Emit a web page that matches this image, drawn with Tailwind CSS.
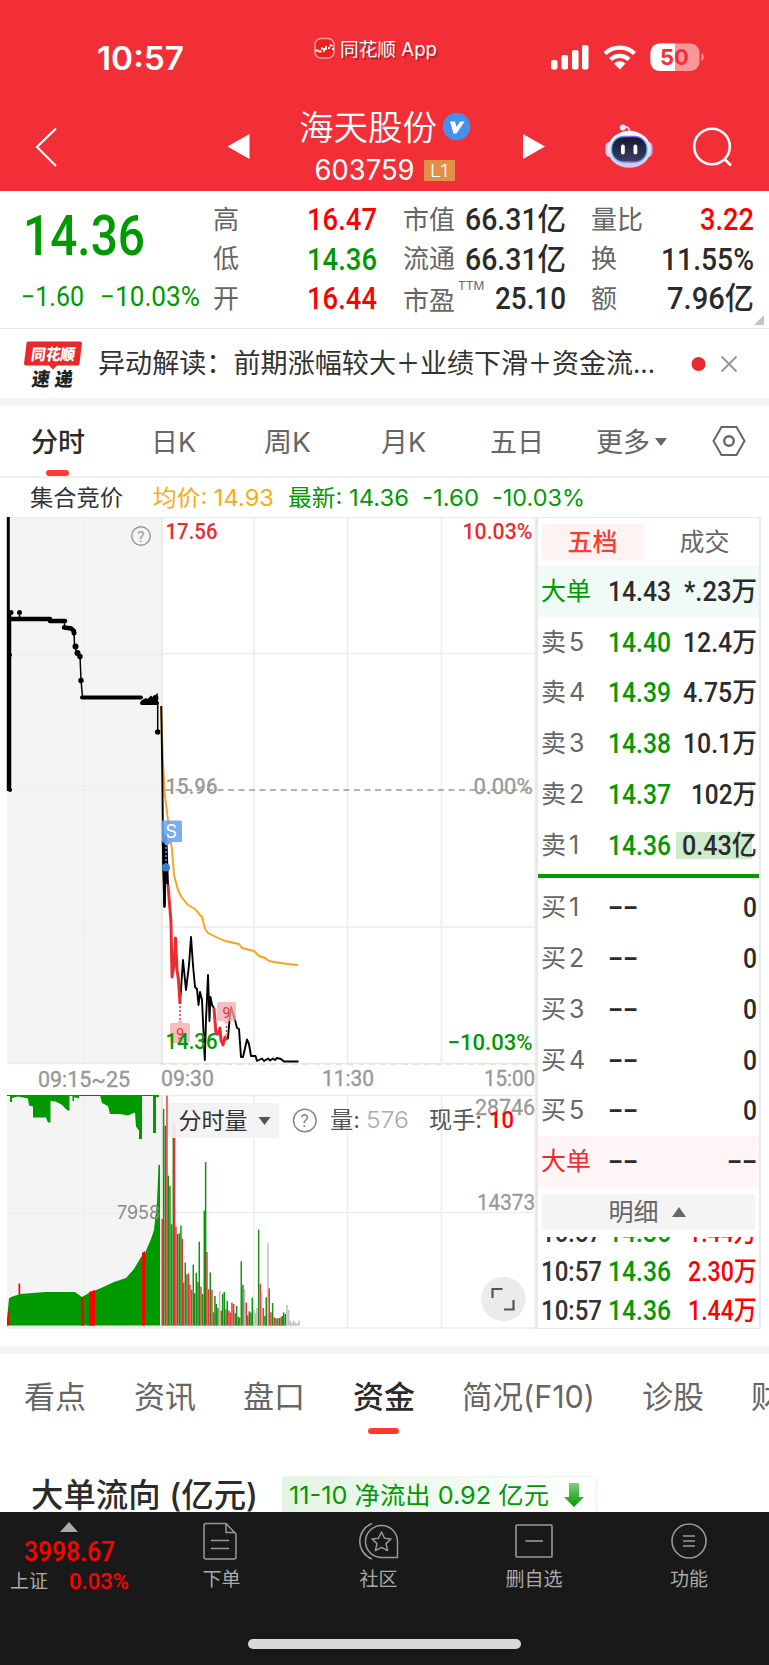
<!DOCTYPE html>
<html lang="zh-CN">
<head>
<meta charset="utf-8">
<title>海天股份 603759</title>
<script src="https://cdn.jsdelivr.net/npm/@tailwindcss/browser@4"></script>
</head>
<body class="bg-white">
<div class="relative flex h-[1665px] w-[769px] flex-col overflow-hidden bg-white font-['Inter','Noto_Sans_CJK_SC',sans-serif] leading-none whitespace-nowrap text-[#333]">

<!-- Header -->
<header class="h-[191px] shrink-0 bg-[#f22f37] text-white">
  <svg class="block" width="769" height="191" viewBox="0 0 769 191" fill="none" font-family="Inter, 'Noto Sans CJK SC', sans-serif">
    <text x="97" y="69.500" font-size="32" font-weight="600" textLength="87" lengthAdjust="spacingAndGlyphs" fill="#fff">10:57</text>
    <rect x="315" y="38.500" width="19" height="19.500" rx="6" fill="#e8201f" stroke="#f9a09f" stroke-width="1.500"/>
    <path d="M315.500 50.500h3M318.500 51.500h3M321.500 49.500l1-2M324 48v4M326 46v4M328 48h2M329.500 45.500h3M332 49h2" stroke="#fff" stroke-width="1.800"/>
    <g font-size="18.500"><text x="341.500" y="57.500" fill="#7d1216" opacity=".55" textLength="97" lengthAdjust="spacingAndGlyphs">同花顺 App</text><text x="340" y="56" fill="#fff" textLength="97" lengthAdjust="spacingAndGlyphs">同花顺 App</text></g>
    <g fill="#fff"><rect x="551" y="60" width="6.500" height="9.500" rx="2"/><rect x="561.500" y="55" width="6.500" height="14.500" rx="2"/><rect x="572" y="50" width="6.500" height="19.500" rx="2"/><rect x="582" y="45" width="6.500" height="24.500" rx="2"/></g>
    <path d="M605 53.500a21.500 21.500 0 0 1 29.500 0M610.500 59.500a13.500 13.500 0 0 1 18.500 0" stroke="#fff" stroke-width="4.300"/>
    <path d="M614 63.500a8.600 8.600 0 0 1 11.500 0L619.800 69.500z" fill="#fff"/>
    <rect x="650.500" y="43.500" width="49" height="27.500" rx="9" fill="#fff" fill-opacity=".5"/>
    <path d="M675 43.500h-15.500a9 9 0 0 0-9 9v9.500a9 9 0 0 0 9 9H675z" fill="#fff"/>
    <path d="M701.500 53v8c3-1.500 3-6.500 0-8z" fill="#fff" fill-opacity=".5"/>
    <text x="660" y="65" font-size="22" font-weight="700" fill="#f22f37" textLength="29" lengthAdjust="spacingAndGlyphs">50</text>
    <path d="M56 128.500 37 147l19 19" stroke="#fff" stroke-width="2.200"/>
    <path d="M227.500 146.500 249.500 134v25zM545 146.500 523 134v25z" fill="#fff"/>
    <text x="299" y="139.500" font-size="34.500" font-weight="350" fill="#fff">海天股份</text>
    <circle cx="456.500" cy="126.500" r="13.700" fill="#4490ee"/>
    <path d="M450 121.500h5l1.500 5.500 3.500-5.500h4.500l-8 12h-3z" fill="#fff"/>
    <text x="314.500" y="179.500" font-size="28" fill="#fff" textLength="100" lengthAdjust="spacingAndGlyphs">603759</text>
    <rect x="424" y="160" width="31" height="21" fill="#e28f48"/>
    <text x="430" y="176.500" font-size="17.500" font-weight="300" fill="#fff" textLength="18" lengthAdjust="spacingAndGlyphs">L1</text>
    <defs>
      <linearGradient id="bot" x1="0" y1="0" x2="0" y2="1"><stop stop-color="#fff"/><stop offset="1" stop-color="#c9c8ee"/></linearGradient>
      <linearGradient id="face" x1="0" y1="0" x2="0" y2="1"><stop stop-color="#14172f"/><stop offset="1" stop-color="#3a4065"/></linearGradient>
      <linearGradient id="rim" x1="0" y1="0" x2="1" y2="0"><stop stop-color="#57c9f5"/><stop offset=".6" stop-color="#8b5cf0"/><stop offset="1" stop-color="#5db6f7"/></linearGradient>
    </defs>
    <path d="M629.500 131c0-3-1.500-4.500-6-4" stroke="#dcdcf4" stroke-width="1.800"/><circle cx="622.800" cy="127.500" r="3" fill="#f2ecfb"/>
    <rect x="605.500" y="142" width="9" height="15" rx="4.500" fill="#d5d2ef"/><rect x="643.500" y="142" width="9" height="15" rx="4.500" fill="#bdbbe4"/>
    <ellipse cx="629.300" cy="149.300" rx="21.500" ry="18.500" fill="url(#bot)"/>
    <rect x="611.500" y="136.500" width="35.500" height="25.500" rx="12" fill="url(#face)" stroke="url(#rim)" stroke-width="1.300"/>
    <rect x="621" y="144.500" width="3.800" height="10" rx="1.900" fill="#fff"/><rect x="633.500" y="144.500" width="3.800" height="10" rx="1.900" fill="#fff"/>
    <circle cx="712" cy="146.500" r="17.800" stroke="#fff" stroke-width="2.600"/><path d="m724 158.500 7 7" stroke="#fff" stroke-width="2.600"/>
  </svg>
</header>

<!-- Quote summary -->
<section class="relative flex h-[138px] shrink-0 border-b border-[#e8e8e8] font-['Roboto','Noto_Sans_CJK_SC',sans-serif]">
  <div class="w-[213px] shrink-0 pt-[15px] text-[#009a00]">
    <div class="flex h-[58px] items-center pl-[23px] text-[55px] font-medium"><span data-w="122">14.36</span></div>
    <div class="mt-[13px] flex h-[38px] items-center pl-[21px] text-[27px]"><span data-w="63">−1.60</span><span class="ml-[16px]" data-w="100">−10.03%</span></div>
  </div>
  <div class="mt-[9px] flex w-[164px] shrink-0 flex-col text-[26px] text-[#666]">
    <div class="flex h-[39.500px] items-center justify-between">高<span class="mt-[-2px] text-[31px] font-medium text-[#f00]" data-w="70">16.47</span></div>
    <div class="flex h-[39.500px] items-center justify-between">低<span class="mt-[-2px] text-[31px] font-medium text-[#009a00]" data-w="70">14.36</span></div>
    <div class="flex h-[39.500px] items-center justify-between">开<span class="mt-[-2px] text-[31px] font-medium text-[#f00]" data-w="70">16.44</span></div>
  </div>
  <div class="mt-[9px] ml-[26px] flex w-[163px] shrink-0 flex-col text-[26px] text-[#666]">
    <div class="flex h-[39.500px] items-center justify-between">市值<span class="mt-[-2px] text-[31px] font-medium text-[#2b2b2b]" data-w="101">66.31亿</span></div>
    <div class="flex h-[39.500px] items-center justify-between">流通<span class="mt-[-2px] text-[31px] font-medium text-[#2b2b2b]" data-w="101">66.31亿</span></div>
    <div class="flex h-[39.500px] items-center justify-between"><span class="flex"><span class="pt-[4px]">市盈</span><span class="mt-[-4px] ml-[3px] font-[Inter] text-[12px]">TTM</span></span><span class="mt-[-2px] text-[31px] font-medium text-[#2b2b2b]" data-w="71">25.10</span></div>
  </div>
  <div class="mt-[9px] ml-[25px] flex w-[163px] shrink-0 flex-col text-[26px] text-[#666]">
    <div class="flex h-[39.500px] items-center justify-between">量比<span class="mt-[-2px] text-[31px] font-medium text-[#f00]" data-w="54">3.22</span></div>
    <div class="flex h-[39.500px] items-center justify-between">换<span class="mt-[-2px] text-[31px] font-medium text-[#2b2b2b]" data-w="93">11.55%</span></div>
    <div class="flex h-[39.500px] items-center justify-between">额<span class="mt-[-2px] text-[31px] font-medium text-[#2b2b2b]" data-w="87">7.96亿</span></div>
  </div>
  <svg class="absolute right-[5px] bottom-[3px]" width="10" height="10"><path d="M10 0v10H0z" fill="#c4c4c4"/></svg>
</section>

<!-- News flash -->
<section class="flex h-[69px] shrink-0 items-center pl-[24px]">
  <svg class="shrink-0" width="60" height="52" viewBox="24 336 60 52" font-family="'Noto Sans CJK SC', sans-serif" font-weight="900">
    <path d="M29 339.500h51a2 2 0 0 1 2 2l-2.500 20a2 2 0 0 1-2 2H57l-4 4-4-4H26a2 2 0 0 1-2-2l2.500-20a2 2 0 0 1 2.500-2z" fill="#e9282d"/>
    <text transform="translate(30.500 358) skewX(-8)" font-size="15.500" fill="#fff" textLength="44" lengthAdjust="spacingAndGlyphs">同花顺</text>
    <text transform="translate(31 384) skewX(-8)" font-size="19" fill="#222"><tspan x="0" textLength="18" lengthAdjust="spacingAndGlyphs">速</tspan><tspan x="23" textLength="18" lengthAdjust="spacingAndGlyphs">递</tspan></text>
  </svg>
  <div class="ml-[14px] flex w-[593px] shrink-0 items-center text-[27px]"><span data-w="298">异动解读：前期涨幅较大</span><span data-w="24">＋</span><span data-w="108">业绩下滑</span><span data-w="24">＋</span><span data-w="81">资金流</span><span data-w="22">...</span></div>
  <svg class="shrink-0" width="50" height="20" viewBox="691 0 50 20"><circle cx="698.500" cy="10" r="7" fill="#e9292e"/><path d="m721.500 2.500 15 15m0-15-15 15" stroke="#999" stroke-width="2"/></svg>
</section>
<div class="h-[8px] shrink-0 bg-[#f4f4f4]"></div>

<!-- Period tabs -->
<nav class="relative flex h-[72px] shrink-0 items-center border-b-2 border-[#efefef] pt-[2px] text-[27px] text-[#666]">
  <span class="ml-[31px] w-[120px] shrink-0 font-medium text-[#2b2b2b]">分时</span>
  <span class="w-[113px] shrink-0"><span data-w="45">日K</span></span>
  <span class="w-[117px] shrink-0"><span data-w="47">周K</span></span>
  <span class="w-[109px] shrink-0"><span data-w="45">月K</span></span>
  <span class="w-[106px] shrink-0">五日</span>
  <span class="shrink-0">更多</span>
  <svg class="ml-[5px] shrink-0" width="12" height="10"><path d="M0 1h12L6 9z" fill="#666"/></svg>
  <svg class="mt-[-2px] ml-[45px] shrink-0" width="34" height="32" viewBox="0 0 34 32" fill="none" stroke="#666" stroke-width="2"><path d="M9.500 2h15l8 14-8 14h-15L1.500 16z"/><circle cx="17" cy="16" r="4.800" stroke-width="2.400"/></svg>
  <i class="absolute bottom-0 left-[46px] h-[6px] w-[23px] rounded-full bg-[#ff3a30]"></i>
</nav>
<div class="flex h-[39px] shrink-0 items-center pt-[2px] text-[22.500px]">
  <span class="ml-[30px] w-[123px] shrink-0"><span data-w="93">集合竞价</span></span>
  <span class="w-[135px] shrink-0 text-[#ffa90d]"><span data-w="121">均价: 14.93</span></span>
  <span class="w-[134px] shrink-0 text-[#009a00]"><span data-w="121">最新: 14.36</span></span>
  <span class="w-[70px] shrink-0 text-[#009a00]"><span data-w="57">-1.60</span></span>
  <span class="text-[#009a00]"><span data-w="93">-10.03%</span></span>
</div>

<!-- Chart and order book -->
<section class="flex h-[812px] shrink-0">
  <svg class="block shrink-0" width="536" height="812" viewBox="0 517 536 812" fill="none" font-family="Roboto, 'Noto Sans CJK SC', sans-serif">
    <rect x="7" y="517" width="154.500" height="546" fill="#f4f4f4"/><rect x="7" y="1095" width="154.500" height="234" fill="#f4f4f4"/>
    <g stroke="#ececec" stroke-width="1.500">
      <path d="M7 517.500H537M162 653.500H537M162 927H537M7 1063.500H537M7 1095.500H537M162 1212.500H537M7 1328H537M254 517v547M347.500 517v547M441.500 517v547M254 1095v233M347.500 1095v233M441.500 1095v233M535.300 517v812"/>
      <path d="M162 517v547M162 1095v233" stroke="#e4e4e4"/>
      <path d="M84.500 517v547M84.500 1095v233M7 654.500H162M7 928H162M7 1213H162M7 790H162" stroke-dasharray="2 2" stroke="#eaeaea"/>
    </g>
    <path d="M165 790H533" stroke="#999" stroke-width="1.300" stroke-dasharray="6 4.500"/>
    <path d="M160 1064H537" stroke="#f0dcc4" stroke-width="1.500" stroke-dasharray="6 5"/>
    <circle cx="141" cy="536" r="9.300" stroke="#999" stroke-width="1.400"/><text x="137.200" y="541.500" font-size="15" fill="#999">?</text>
    <g stroke="#000">
      <path d="M8.300 517V791" stroke-width="3"/><path d="M9.500 611V791" stroke-width="3.500"/>
      <path d="M10 619H50M50 621H65M64 627.500L71 628.500L74 631" stroke-width="4.500" stroke-linecap="round"/>
      <path d="M64.500 621v6M74 630L74.500 646L77 653L80 656L81 680L82.500 697M157.700 703V732M19.500 612V619" stroke-width="1.500"/>
      <path d="M82 697.500H141M142 703H157" stroke-width="4" stroke-linecap="round"/><path d="m142 702 4-2 2 1 3-3 2 2 3-3v6" stroke-width="3.500"/>
    </g>
    <g fill="#000"><circle cx="11" cy="612.500" r="2.500"/><circle cx="19.500" cy="612.500" r="2.500"/><circle cx="10" cy="655" r="2"/><circle cx="10" cy="790" r="2"/><circle cx="74" cy="633" r="2.500"/><circle cx="75.500" cy="646.500" r="3"/><circle cx="77.500" cy="653" r="3"/><circle cx="80" cy="656.500" r="2.700"/><circle cx="81" cy="680.500" r="2.700"/><circle cx="155.500" cy="698" r="3"/><circle cx="157.700" cy="732" r="2.700"/></g>
    <g font-size="22">
      <text x="165.500" y="539" font-weight="500" fill="#ee2a2e" textLength="52" lengthAdjust="spacingAndGlyphs">17.56</text>
      <text x="462.500" y="539" font-weight="500" fill="#ee2a2e" textLength="70" lengthAdjust="spacingAndGlyphs">10.03%</text>
      <text x="165.500" y="794" font-weight="500" fill="#999" textLength="52" lengthAdjust="spacingAndGlyphs">15.96</text>
      <text x="473.500" y="794" fill="#999" stroke="#999" stroke-width=".3" textLength="59" lengthAdjust="spacingAndGlyphs">0.00%</text>
      <text x="447.500" y="1049.500" font-weight="500" fill="#009a00" textLength="85" lengthAdjust="spacingAndGlyphs">−10.03%</text>
    </g>
    <path d="M161 706L163 760L164.500 792L168 820L172 850L174 875L178 890L181.500 897L188 905L195 909L199 914L202 917L205 929L208 933L216 937L225 941L239 944L242 948L254 951L259 956L265 958L269 961L280 963L288 964L298 965" stroke="#ff9f1c" stroke-width="1.900" stroke-linejoin="round"/>
    <g stroke-width="2" stroke-linejoin="round">
      <path d="M161.300 706L162.500 790L163 843L164.500 907L165.500 835L166.500 842L168 885M180 1004L183 960L186 990L189 965L191 937L193 965L195 987L197 989L198.500 1005L200 992L202 1000L204.800 1060L206 1020L208 975L209.500 1021L210.500 997L212 1005L214 1008M226.500 1040L228 1038L229.500 1020L231 1007L235 1020L237 1028L239 1029L241 1057H243L247 1039.500L249 1044L251 1056H255.500L257 1061L262 1058.500L264 1061L268 1058.500L270 1060.500L273 1058.500L275 1060L277 1058L281 1059L284 1061.500H298.500" stroke="#000" stroke-width="1.900"/>
      <path d="M163 840l1.500 66L165.500 836l1.500 48" stroke="#000" stroke-width="2.500"/>
      <path d="M168 885L171 922L172 977L174 965L175.500 938L177 970L178.500 980L180 1004M214 1008L216 1034H218L220 1028L221 1040L223 1045L225 1037L227 1040" stroke="#ea2d31" stroke-width="3"/>
    </g>
    <path d="M180 1006v14M226.500 1026v9" stroke="#ea2d31" stroke-width="1.500" stroke-dasharray="2 2"/>
    <g fill="#f6a7aa" fill-opacity=".75"><path d="M172 1023h5l3-4 3 4h5a2 2 0 0 1 2 2v16a2 2 0 0 1-2 2h-16a2 2 0 0 1-2-2v-16a2 2 0 0 1 2-2z"/><path d="M219 1002h15a2 2 0 0 1 2 2v15a2 2 0 0 1-2 2h-5l-3 4-3-4h-4a2 2 0 0 1-2-2v-15a2 2 0 0 1 2-2z"/></g>
    <g font-size="14" fill="#ea2d31"><text x="176.200" y="1039">9</text><text x="222.500" y="1018">9</text></g>
    <text x="165.500" y="1049" font-size="22" font-weight="500" fill="#009a00" textLength="52" lengthAdjust="spacingAndGlyphs">14.36</text>
    <path d="M166 843v24" stroke="#3d7fd6" stroke-width="2" stroke-dasharray="2 2"/><circle cx="166" cy="867.500" r="4" fill="#3b7dd0"/>
    <rect x="161.500" y="820.500" width="20.500" height="21.500" rx="1.500" fill="#6ba5f2" fill-opacity=".9"/><path d="m163 842h8l-4 4z" fill="#6ba5f2"/>
    <text x="165.500" y="838" font-size="18" font-family="Inter" fill="#fff">S</text>
    <g font-size="22" fill="#999" stroke="#999" stroke-width=".4"><text x="38" y="1087" textLength="92" lengthAdjust="spacingAndGlyphs">09:15~25</text><text x="161" y="1086" textLength="53" lengthAdjust="spacingAndGlyphs">09:30</text><text x="322" y="1086" textLength="52" lengthAdjust="spacingAndGlyphs">11:30</text><text x="484" y="1086" textLength="51" lengthAdjust="spacingAndGlyphs">15:00</text></g>

    <path d="M7 1095.500h152" stroke="#009a00"/><path d="M7 1095.500h3M80 1095.500h20M142 1095.500h9" stroke="#f00"/>
    <path d="M10 1095v7h2v-4l6-1.500 10 2 1 7 4 1v11h13l2 5h2.500v-21.500l5 .5 6 3 6 6h2V1095h3v6h1.500v-4l5 1.500v-3.500H100l2 8 6 3 2 8h10l8 1.500 7-3 1 14 3 4v8.500h3V1095h11v38h3v-36h3v-2z" fill="#009a00"/>
    <path d="M7 1325.500v-6l2-21 2-1.500 9-3 25-2h30l7 5 7-4 12-5 13-6 12-4 8-9 7-12 4-4 6-14 3-9 3-28 1.500-37h1.500v160.500z" fill="#009a00"/>
    <path d="M81 1297h3v28.500h-3zM89 1292l6-2v35.500h-6zM142 1253l3-2v74.500h-3zM18.500 1283.500h1.700v11h-1.700zM7 1320l2-12v17.500H7z" fill="#f00"/>
    <g id="volume"></g>
    <text x="117" y="1219" font-size="19" font-family="Inter" fill="#8b8b8b" textLength="43" lengthAdjust="spacingAndGlyphs">7958</text>
    <g font-size="22" fill="#999" stroke="#999" stroke-width=".3"><text x="475" y="1114.500" textLength="60" lengthAdjust="spacingAndGlyphs">28746</text>
    <text x="477" y="1210" textLength="58" lengthAdjust="spacingAndGlyphs">14373</text></g>
    <rect x="168" y="1103" width="111" height="35" rx="3" fill="#f2f2f2" fill-opacity=".93"/>
    <text x="178.500" y="1129" font-size="23" fill="#333">分时量</text><path d="M258.500 1117h12l-6 8z" fill="#555"/>
    <circle cx="304.800" cy="1120.500" r="11.300" stroke="#888" stroke-width="1.500"/><text x="300.200" y="1127" font-size="18" fill="#888">?</text>
    <g font-size="23" font-family="Inter, 'Noto Sans CJK SC', sans-serif"><text x="330" y="1128" fill="#555" textLength="30" lengthAdjust="spacingAndGlyphs">量:</text><text x="366" y="1128" fill="#aaa" textLength="43" lengthAdjust="spacingAndGlyphs" font-weight="300">576</text><text x="429" y="1128" fill="#555" textLength="53" lengthAdjust="spacingAndGlyphs">现手:</text></g>
    <text x="489" y="1128" font-size="23" font-weight="500" fill="#f00" textLength="25" lengthAdjust="spacingAndGlyphs">10</text>
    <circle cx="503.400" cy="1299" r="22.300" fill="#ebebeb"/><path d="M492.500 1298v-9h10M504 1309.500h9.500V1300" stroke="#555" stroke-width="2.200"/>
  </svg>

  <div class="flex w-[225px] shrink-0 flex-col border-x-2 border-y border-[#e9e9e9] font-['Roboto','Noto_Sans_CJK_SC',sans-serif] text-[25px]">
    <div class="flex h-[48px] shrink-0 items-center pl-[4px]">
      <span class="flex h-[37px] w-[101px] items-center justify-center rounded bg-[#fff2f2] font-medium text-[#ff3a30]">五档</span>
      <span class="flex flex-1 justify-center pl-[7px] text-[#666]">成交</span>
    </div>
    <div id="book" class="flex shrink-0 flex-col"></div>
    <div class="mr-[4px] ml-[4px] mt-[7px] flex h-[36px] shrink-0 items-center justify-center gap-[13px] bg-[#f4f4f4] pr-[3px] text-[#666]">明细<svg width="14" height="11"><path d="M7 0l7 10H0z" fill="#666"/></svg></div>
    <div class="mt-[7px] flex min-h-0 flex-1 flex-col overflow-hidden"><div class="mt-[-24px] flex shrink-0 flex-col" id="ticks"></div></div>
  </div>
</section>

<div class="mt-[17px] h-[8px] shrink-0 bg-[#f4f4f4]"></div>

<!-- Section tabs -->
<nav class="relative flex h-[88px] shrink-0 items-center pb-[3px] text-[31px] text-[#666]">
  <span class="ml-[24px] w-[110px] shrink-0">看点</span><span class="w-[109px] shrink-0">资讯</span><span class="w-[110px] shrink-0">盘口</span>
  <span class="w-[109px] shrink-0 font-medium text-[#2b2b2b]">资金</span><span class="w-[180px] shrink-0"><span data-w="133">简况(F10)</span></span><span class="w-[109px] shrink-0">诊股</span><span class="shrink-0">财务</span>
  <i class="absolute bottom-[8px] left-[368px] h-[6px] w-[31px] rounded-full bg-[#ff3a30]"></i>
</nav>
<div class="flex h-[70px] shrink-0 items-end overflow-hidden pl-[31px]">
  <h2 class="h-[33px] w-[251px] shrink-0 text-[32.500px] font-medium text-[#2b2b2b]"><span data-w="227">大单流向 (亿元)</span></h2>
  <div class="flex h-[36px] w-[315px] shrink-0 items-center gap-[15px] rounded-t border border-b-0 border-[#e9f6e9] bg-linear-to-r from-[#e3f4e4] to-white pl-[6px] text-[24px] text-[#009a00]"><span data-w="260">11-10 净流出 0.92 亿元</span>
    <svg width="20" height="24"><defs><linearGradient id="ar" x1="0" y1="0" x2="0" y2="1"><stop stop-color="#7fd07f"/><stop offset="1" stop-color="#009a00"/></linearGradient></defs><path d="M5 0h10v14h5L10 24 0 14h5z" fill="url(#ar)"/></svg>
  </div>
</div>

<!-- Bottom bar -->
<footer class="relative flex h-[153px] shrink-0 bg-[#191919] text-[19px] text-[#aaa]">
  <div class="flex w-[140px] shrink-0 flex-col pt-[10px] font-['Roboto','Noto_Sans_CJK_SC',sans-serif]">
    <svg class="ml-[60px]" width="18" height="10"><path d="M9 0l9 10H0z" fill="#aaa"/></svg>
    <span class="mt-[5px] ml-[24px] flex h-[28px] items-center text-[27px] font-medium text-[#f00]"><span data-w="91">3998.67</span></span>
    <span class="ml-[10px] flex h-[33px] items-center">上证<span class="ml-[21px] text-[22.500px] font-medium text-[#f00]" data-w="60">0.03%</span></span>
  </div>
  <div class="flex w-[159px] shrink-0 flex-col items-center pt-[10px]">
    <svg width="36" height="38" viewBox="0 0 36 38" fill="none" stroke="#999" stroke-width="1.500"><path d="M3 1.500h21L34 12v23a2 2 0 0 1-2 2H4a2 2 0 0 1-2-2V3z"/><path d="M24 1.500V10.500h9M9 18.500h18M9 26.500h18"/></svg><span class="mt-[10px] pl-[4px]">下单</span>
  </div>
  <div class="flex w-[159px] shrink-0 flex-col items-center pt-[10px]">
    <svg width="40" height="38" viewBox="0 0 40 38" fill="none" stroke="#999" stroke-width="1.500"><path d="M13 1.500A19 19 0 0 0 13 37M38.500 35.500H22a16 16 0 1 1 16.500-16z"/><path d="m22.500 10 3 6.300 6.500.7-5 4.600 1.600 7-6.100-3.200-6.100 3.200 1.600-7-5-4.600 6.500-.7z" stroke-linejoin="round"/></svg><span class="mt-[10px]">社区</span>
  </div>
  <div class="flex w-[152px] shrink-0 flex-col items-center pt-[10px]">
    <svg width="38" height="38" viewBox="0 0 38 38" fill="none" stroke="#999" stroke-width="1.600"><rect x="1" y="3" width="36" height="32" rx="1"/><path d="M10.500 19h17.500"/></svg><span class="mt-[10px]">删自选</span>
  </div>
  <div class="flex w-[158px] shrink-0 flex-col items-center pt-[10px]">
    <svg width="38" height="38" viewBox="0 0 38 38" fill="none" stroke="#999" stroke-width="1.600"><circle cx="19" cy="19" r="17"/><path d="M13 14h12M13 19h12M13 24h12"/></svg><span class="mt-[10px]">功能</span>
  </div>
  <i class="absolute bottom-[16px] left-[248px] h-[10px] w-[273px] rounded-full bg-[#d8d8d8]"></i>
</footer>
</div>

<script>
  // Order book rows: label, price, amount, price colour, amount width, row fill, label style
  const G = 'text-[#009a00]', K = 'text-[#2b2b2b]', R = 'text-[#f00]';
  const rows = [
    ['大单', '14.43', '*.23万', K, 73, 'bg-[#f0faf6]', 'text-[#009a00]'],
    ['卖5', '14.40', '12.4万', G, 74], ['卖4', '14.39', '4.75万', G, 74], ['卖3', '14.38', '10.1万', G, 74],
    ['卖2', '14.37', '102万', G, 66], ['卖1', '14.36', '0.43亿', G, 75],
    null,
    ['买1', '––', '0', K, 14], ['买2', '––', '0', K, 14], ['买3', '––', '0', K, 14], ['买4', '––', '0', K, 14], ['买5', '––', '0', K, 14],
    ['大单', '––', '––', K, 30, 'bg-[#fff5f6]', 'text-[#f0292e]']
  ];
  document.getElementById('book').innerHTML = rows.map(r => {
    if (!r) return '<div class="mt-[3px] mb-[5px] h-[4px] bg-[#009a00]"></div>';
    const [l, p, a, c, w, bg = '', lc = 'text-[#666]'] = r;
    const label = l === '大单' ? l : `${l[0]}<span class="ml-[3px] font-[Inter]">${l[1]}</span>`;
    const fill = l === '卖1' ? '<i class="absolute top-[12px] right-[7px] h-[27px] w-[76px] bg-[#cdebcd]"></i>' : l === '卖2' ? '<i class="absolute top-[12px] right-[7px] h-[27px] w-[2px] bg-[#cdebcd]"></i>' : '';
    return `<div class="relative flex h-[50.750px] items-center pl-[3px] pr-[2px] ${bg}">${fill}<span class="w-[67px] shrink-0 ${lc}">${label}</span><span class="text-[27px] font-medium ${c}"><span data-w="${p === '––' ? 30 : 63}">${p}</span></span><span class="relative ml-auto text-[27px] font-medium text-[#2b2b2b]"><span data-w="${w}">${a}</span></span></div>`;
  }).join('');
  document.getElementById('ticks').innerHTML = ['1.44万', '2.30万', '1.44万'].map(a =>
    `<div class="flex h-[39px] shrink-0 items-center pl-[3px] pr-[2px] text-[27px] font-medium"><span class="w-[67px]"><span data-w="61">10:57</span></span><span class="${G}"><span data-w="63">14.36</span></span><span class="ml-auto ${R}"><span data-w="69">${a}</span></span></div>`).join('');

  // Minute volume: x, top, colour (g / r / n), in thirds of a pixel
  const v = '487 417 r,491 87 g,496 137 g,501 47 r,505 287 g,510 318 g,515 433 g,520 122 g,524 130 r,528 440 r,533 462 g,538 460 g,543 437 g,547 476 r,551 608 r,556 548 g,561 583 g,566 580 r,570 614 r,575 629 r,580 554 g,584 640 g,589 578 g,594 606 g,598 485 g,603 620 r,608 642 g,613 392 g,617 246 g,621 516 r,626 628 r,631 577 g,636 630 r,641 697 r,645 648 g,649 672 g,654 684 g,659 633 n,664 692 r,668 642 g,673 636 g,678 688 r,682 662 g,687 692 r,691 698 r,696 668 r,701 672 r,706 700 g,710 678 g,715 710 g,719 713 r,724 544 g,729 615 g,734 628 n,739 668 r,743 706 r,748 694 g,753 698 g,757 653 g,762 690 n,767 700 n,771 684 n,776 449 g,781 611 r,785 635 n,790 684 r,795 708 g,799 652 g,804 490 n,808 625 r,813 697 r,818 669 g,823 712 r,828 715 g,833 715 r,838 714 g,843 712 r,847 708 g,851 697 g,856 702 g,861 675 n,866 690 n,871 722 n,876 728 n,881 722 n,886 728 n,891 730 n,897 722 n';
  document.getElementById('volume').innerHTML = v.split(',').map(s => {
    const [x, y, c] = s.split(' ');
    return `<rect x="${x / 3 - 0.8}" y="${1080 + y / 3}" width="1.500" height="${(737 - y) / 3}" fill="${{ g: '#119311', r: '#ee3338', n: '#bdbdbd' }[c]}"/>`;
  }).join('');

  document.querySelectorAll('[data-w]').forEach(e => {
    const w = e.dataset.w;
    e.innerHTML = `<svg class="block shrink-0 overflow-visible fill-current" width="${w}" height="1em"><text y="0.86em" textLength="${w}" lengthAdjust="spacingAndGlyphs">${e.textContent}</text></svg>`;
  });
</script>
</body>
</html>
